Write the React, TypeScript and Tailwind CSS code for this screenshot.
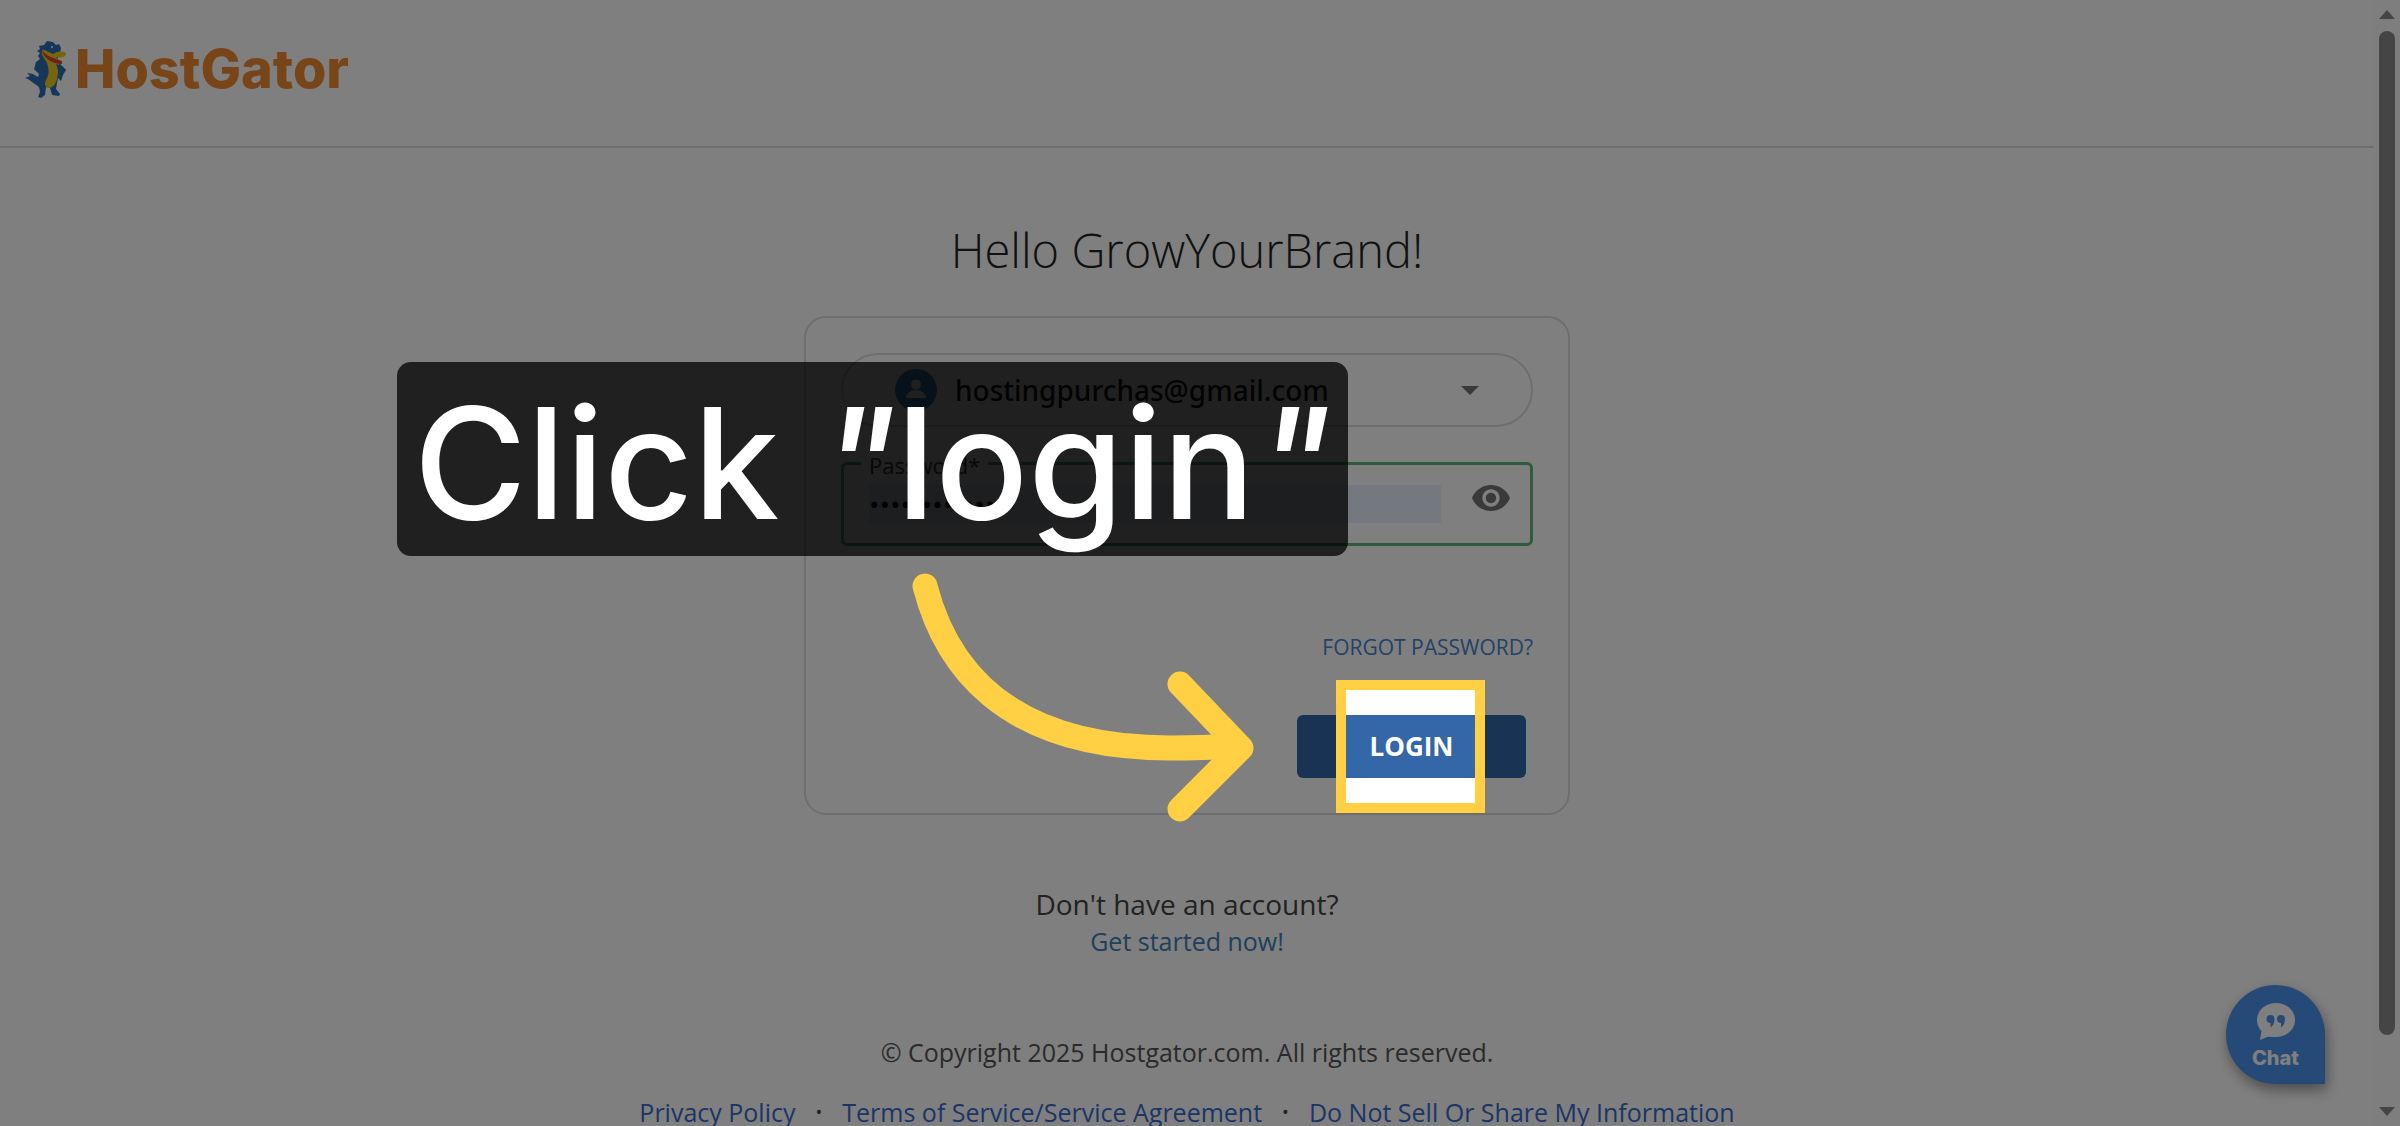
import { useState } from "react";

function Logo() {
  return (
    <a href="/" className="flex items-center gap-2" aria-label="HostGator">
      <svg viewBox="0 0 42 58" className="h-[58px] w-[42px]" aria-hidden>
        <path d="M19 5L22 1L28 2L31 5L34 4L36 8L35 13L32 20L36 25L41 30L38 35L36 41L33 38L32 43L31 49L35 54L34 56L27 55L25 48L21 47L20 55L16 58L13 57L15 52L14 47L7 42L3 39L0 38L5 36L2 33L8 34L13 37L14 34L9 29L11 22L15 19L13 16L15 13L12 11L15 9L14 6Z" fill="#2a70b4" />
        <path d="M17 10C20 9 22 12 28 14L32 12C36 11 41 11 41 14C41 17 37 18 31 17L36 22L34 24L33 30C33 38 31 47 24 48C20 47 19 44 21 40C25 34 24 27 21 21C18 17 16 13 17 10Z" fill="#f3c81c" />
        <path d="M17 10C21 16 28 18 37 21L37 24C27 24 18 18 17 10Z" fill="#d9472b" />
        <path d="M31 24L37 26L41 30L36 34L33 30Z" fill="#2a70b4" />
        <circle cx="27" cy="7" r="1" fill="#fff" />
      </svg>
      <span className="font-['Inter','Liberation_Sans',sans-serif] text-[54px] leading-none font-extrabold text-[#f18a33]">HostGator</span>
    </a>
  );
}

function Scrollbar() {
  return (
    <div className="flex w-[26px] shrink-0 flex-col items-center justify-between bg-[#fcfcfc] py-[10px]" aria-hidden>
      <svg viewBox="0 0 16 9" className="h-[9px] w-4 fill-[#8b8b8b]"><path d="M8 0 16 9H0Z" /></svg>
      <div className="mt-3 mb-[72px] w-4 flex-1 rounded-full bg-[#8b8b8b]" />
      <svg viewBox="0 0 16 9" className="h-[9px] w-4 fill-[#8b8b8b]"><path d="M0 0H16L8 9Z" /></svg>
    </div>
  );
}

function ChatButton() {
  return (
    <button
      type="button"
      className="absolute right-[75px] bottom-[42px] flex h-[99px] w-[99px] flex-col items-center rounded-full rounded-br-none bg-[#4b94ee] pt-[18px] text-white shadow-[2px_6px_14px_rgba(0,0,0,0.4)]"
    >
      <svg viewBox="0 0 38 37" className="h-[37px] w-[38px]" aria-hidden>
        <path d="M19 0C29.500 0 38 7.500 38 17S29.500 34 19 34C15.500 34 12.500 33.200 10 34L3 37L4.500 28C1.700 25 0 21.200 0 17C0 7.500 8.500 0 19 0Z" fill="#fff" />
        <path d="M13.500 12a4 4 0 0 1 4 4c0 4-1.500 7-4 8.500V20a4 4 0 1 1 0-8ZM24 12a4 4 0 0 1 4 4c0 4-1.500 7-4 8.500V20a4 4 0 1 1 0-8Z" fill="#4b94ee" />
      </svg>
      <span className="mt-1.5 font-['Inter','Liberation_Sans',sans-serif] text-[20px] leading-6 font-extrabold">Chat</span>
    </button>
  );
}

function LoginForm() {
  const [password, setPassword] = useState("growyourbrand1");
  const [visible, setVisible] = useState(false);

  return (
    <form
      onSubmit={(event) => event.preventDefault()}
      className="relative mt-[34px] h-[499px] w-[766px] rounded-[22px] border-2 border-[#dadce0] px-[35px] pt-[35px]"
    >
      <div className="flex h-[74px] items-center rounded-full border-2 border-[#dadce0] pr-[52px] pl-[52px]">
        <svg viewBox="0 0 42 42" className="h-[42px] w-[42px]" aria-hidden>
          <circle cx="21" cy="21" r="21" fill="#3f87cf" />
          <circle cx="21" cy="15.500" r="5" fill="#fff" />
          <path d="M11 29c0-5 5-8 10-8s10 3 10 8Z" fill="#fff" />
        </svg>
        <select aria-label="Account" className="ml-[18px] flex-1 appearance-none bg-transparent font-['Noto_Sans','Open_Sans',sans-serif] text-[28px] font-medium text-[#1f1f1f] outline-none">
          <option>hostingpurchas@gmail.com</option>
        </select>
        <svg viewBox="0 0 18 9" className="h-[9px] w-[18px] fill-[#757575]" aria-hidden><path d="M0 0H18L9 9Z" /></svg>
      </div>

      <div className="relative mt-[35px] flex h-[84px] items-center rounded-md border-[3px] border-[#5fb97c] pr-5 pl-[25px]">
        <label htmlFor="password" className="absolute -top-[14px] left-[17px] bg-white px-2 text-[22px] leading-7 text-[#444]">
          Password*
        </label>
        <input
          id="password"
          type={visible ? "text" : "password"}
          value={password}
          onChange={(event) => setPassword(event.target.value)}
          className="h-[38px] w-[572px] bg-[#e8f0fe] text-[28px] text-black outline-none"
        />
        <button type="button" onClick={() => setVisible((v) => !v)} aria-label="Show password" className="mb-3 ml-auto">
          <svg viewBox="1 4 22 16" className="h-[28px] w-[38px] fill-[#757575]" aria-hidden>
            <path d="M12 4.500C7 4.500 2.730 7.610 1 12c1.730 4.390 6 7.500 11 7.500s9.270-3.110 11-7.500c-1.730-4.390-6-7.500-11-7.500zM12 17c-2.760 0-5-2.240-5-5s2.240-5 5-5 5 2.240 5 5-2.240 5-5 5zm0-8c-1.660 0-3 1.340-3 3s1.340 3 3 3 3-1.340 3-3-1.340-3-3-3z" />
          </svg>
        </button>
      </div>

      <div className="mt-[87px] flex justify-end">
        <a href="#forgot" className="text-[21px] leading-7 text-[#4684ce]">FORGOT PASSWORD?</a>
      </div>

      <div className="mt-[54px] flex justify-end pr-[7px]">
        <div className="relative">
          <button type="submit" className="block h-[63px] w-[229px] rounded-md bg-[#3367a8] text-[26px] font-bold text-white">
            LOGIN
          </button>
          {/* spotlight: the spread shadow dims everything outside the frame */}
          <div className="pointer-events-none absolute -top-[35px] left-[39px] z-10 h-[133px] w-[149px] border-10 border-[#ffd043] shadow-[0_0_0_3000px_rgba(0,0,0,0.5)]" />
        </div>
      </div>

      <Callout />
    </form>
  );
}

function Callout() {
  return (
    <>
      <p className="absolute top-[44px] -left-[409px] z-20 flex h-[194px] w-[951px] items-center justify-center rounded-[14px] bg-black/75 pt-2 font-['Inter','Liberation_Sans',sans-serif] text-[154px] leading-none font-medium whitespace-pre text-white">
        Click <span className="italic">"</span>login<span className="italic">"</span>
      </p>
      <svg viewBox="910 570 350 256" className="absolute top-[252px] left-[103px] z-20 h-[256px] w-[350px]" fill="none" stroke="#ffd043" strokeWidth="25" strokeLinecap="round" strokeLinejoin="round" aria-hidden>
        <path d="M926 586C945 660 1000 748 1171 748Q1205 748 1235 746" />
        <path d="M1181 684L1242 748L1181 809" />
      </svg>
    </>
  );
}

export default function App() {
  return (
    <div className="relative flex h-screen overflow-hidden bg-white font-['Open_Sans','Noto_Sans',sans-serif]">
      <div className="min-w-0 flex-1">
        <header className="flex h-[148px] items-start border-b-2 border-[#dcdce4] px-[25px] pt-[40px]">
          <Logo />
        </header>

        <main className="flex flex-col items-center pt-[70px]">
          <h1 className="text-[47px] leading-[64px] font-light text-[#222]">Hello GrowYourBrand!</h1>
          <LoginForm />
          <p className="mt-[70px] text-[28px] leading-[38px] text-[#444]">Don't have an account?</p>
          <a href="#start" className="text-[25px] leading-[36px] text-[#3f7fb9]">Get started now!</a>
        </main>

        <footer className="mt-[75px] flex flex-col items-center text-[25px] leading-[36px] text-[#555]">
          <p>© Copyright 2025 Hostgator.com. All rights reserved.</p>
          <nav className="mt-[24px] flex gap-5 font-medium text-[#3a6bcc]">
            <a href="#privacy">Privacy Policy</a>
            <span className="text-[18px] text-[#444]">•</span>
            <a href="#terms">Terms of Service/Service Agreement</a>
            <span className="text-[18px] text-[#444]">•</span>
            <a href="#do-not-sell">Do Not Sell Or Share My Information</a>
          </nav>
        </footer>
      </div>
      <Scrollbar />
      <ChatButton />
    </div>
  );
}
